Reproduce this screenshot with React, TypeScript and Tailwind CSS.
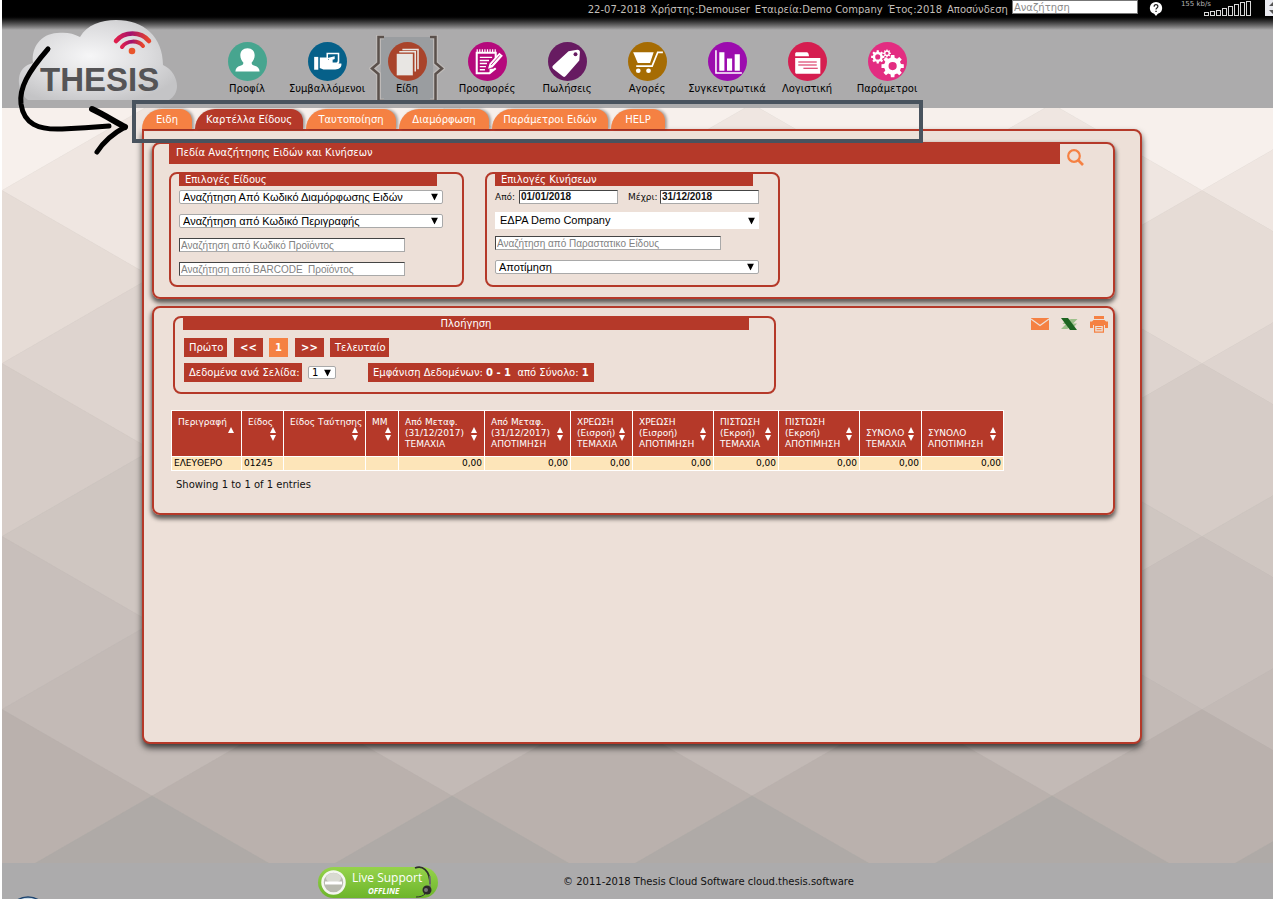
import type { ReactNode } from "react";
import clsx from "clsx";

const TILE_W = 300;
const TILE_H = 173;

const backdropStops: [number, number[]][] = [
  [100, [247, 240, 237]],
  [191, [239, 230, 225]],
  [277, [230, 220, 214]],
  [450, [214, 204, 199]],
  [623, [200, 191, 187]],
  [740, [193, 184, 180]],
  [800, [185, 176, 172]],
  [882, [175, 170, 167]],
];

function backdropColor(y: number) {
  let prev = backdropStops[0];
  for (const stop of backdropStops) {
    if (y <= stop[0]) {
      const span = stop[0] - prev[0] || 1;
      const t = Math.max(0, (y - prev[0]) / span);
      const rgb = stop[1].map((c, i) => Math.round(prev[1][i] + (c - prev[1][i]) * t));
      return `rgb(${rgb.join(",")})`;
    }
    prev = stop;
  }
  return `rgb(${prev[1].join(",")})`;
}

// Rows of rhombi, each row a bit darker than the one above
function Backdrop() {
  const tiles: ReactNode[] = [];
  for (let row = 0; row < 11; row++) {
    const cy = 104 + (row * TILE_H) / 2;
    const shift = row % 2 === 0 ? 0 : 150;
    for (let col = -1; col < 6; col++) {
      const cx = shift + col * TILE_W;
      const fill = backdropColor(cy);
      tiles.push(
        <path
          key={`${row}-${col}`}
          d={`M${cx} ${cy - TILE_H / 2}L${cx + TILE_W / 2} ${cy}L${cx} ${cy + TILE_H / 2}L${cx - TILE_W / 2} ${cy}Z`}
          fill={fill}
          stroke={fill}
          strokeWidth={0.5}
        />
      );
    }
  }
  return (
    <svg
      className="absolute inset-0 w-full h-full"
      viewBox="0 108 1271 755"
      preserveAspectRatio="xMinYMin slice"
      aria-hidden="true"
    >
      {tiles}
    </svg>
  );
}

function gear(cx: number, cy: number, r: number, teeth: number, hole: number) {
  const pts: string[] = [];
  const step = (Math.PI * 2) / teeth;
  for (let i = 0; i < teeth; i++) {
    const a = i * step;
    [
      [-0.3, 0.76],
      [-0.2, 1],
      [0.2, 1],
      [0.3, 0.76],
    ].forEach(([o, k]) => {
      pts.push(`${(cx + Math.cos(a + o * step) * r * k).toFixed(2)} ${(cy + Math.sin(a + o * step) * r * k).toFixed(2)}`);
    });
  }
  return `M${pts.join("L")}Z M${cx - hole} ${cy}a${hole} ${hole} 0 1 0 ${hole * 2} 0a${hole} ${hole} 0 1 0 ${-hole * 2} 0Z`;
}

const navItems: { label: string; color: string; active?: boolean; icon: ReactNode }[] = [
  {
    label: "Προφίλ",
    color: "#47a58f",
    icon: (
      <path
        fill="#fff"
        d="M19 6c4.500 0 7 3 7 7 0 3-1.500 5.800-3 7.200 0 1.600 1 2.300 3 3 3 1 4.500 2.300 4.800 5.600H7.200c.3-3.300 1.800-4.600 4.800-5.600 2-.7 3-1.400 3-3-1.500-1.400-3-4.200-3-7.200 0-4 2.500-7 7-7z"
      />
    ),
  },
  {
    label: "Συμβαλλόμενοι",
    color: "#066089",
    icon: (
      <g fill="#fff">
        <path d="M6 14.500h4V27H6z" />
        <path d="M11.500 15h7.500v3h5v3h8.500c.6 3.500-2 5.800-6 5.800H15l-3.500-1.500z" />
        <path d="M18 10.500h12.500v8c0 2.500-1 3.500-3 3.500h-6.500c-2 0-3-1-3-3z" />
        <path fill="#066089" d="M19.500 12H29v5.500c0 1.700-.7 2.500-2.200 2.500H24v-2.500h-4.500z" />
        <path d="M19 15.500l7-1.500v2.500l-5 2z" />
      </g>
    ),
  },
  {
    label: "Είδη",
    color: "#a9442b",
    active: true,
    icon: (
      <g fill="#e8e6e3">
        <path d="M14 6.500h16v20h-1.500V8H14z" />
        <path d="M11 8.700h16.300v20h-1.500V10.200H11z" />
        <path d="M8.500 11.500h15.700v21H8.500z" />
      </g>
    ),
  },
  {
    label: "Προσφορές",
    color: "#b5097c",
    icon: (
      <g>
        <path fill="none" stroke="#fff" strokeWidth="2" d="M27 16V10.500H8.500v20H21l6-5" />
        <path stroke="#fff" strokeWidth="1.200" d="M9 7v3M11.500 7v3M14 7v3M16.500 7v3M19 7v3M21.500 7v3M24 7v3M26.500 7v3" />
        <path stroke="#fff" strokeWidth="1.400" d="M11.500 15h12M11.500 18h9M11.500 21h7M11.500 24h6M11.500 27h5" />
        <path fill="#fff" d="M21 21L30.500 10.500l3.500 3L24 24.500l-4.500 1.500zM21 31v-5h6.500z" />
        <path stroke="#b5097c" strokeWidth=".8" d="M22.500 22.500L31 13" />
      </g>
    ),
  },
  {
    label: "Πωλήσεις",
    color: "#671b61",
    icon: (
      <g>
        <path fill="#fff" d="M20 9L28.500 7.500c1.500-.2 2.700.8 2.600 2.300L30.500 18 17.500 33c-1 1.200-2 1.300-3.200.3L5 26c-1-1-1-2 0-3z" />
        <circle cx="26.800" cy="12" r="1.900" fill="#671b61" />
      </g>
    ),
  },
  {
    label: "Αγορές",
    color: "#a66c03",
    icon: (
      <g fill="#fff">
        <path d="M5 10h20l-3.500 10.500H9.500z" />
        <path fill="none" stroke="#fff" strokeWidth="1.700" d="M34 10h-5l-5.500 13.500H8" />
        <circle cx="10" cy="28" r="2.300" />
        <circle cx="20" cy="28" r="2.300" />
      </g>
    ),
  },
  {
    label: "Συγκεντρωτικά",
    color: "#9c0cae",
    icon: (
      <g fill="#fff">
        <path d="M7 8h1.500v21.500H33V31H7z" />
        <path d="M11 10h5v18h-5zM18.500 16h5v12h-5zM26 12h5v16h-5z" />
      </g>
    ),
  },
  {
    label: "Λογιστική",
    color: "#d51e50",
    icon: (
      <g>
        <path fill="#fff" d="M7 14V11.500c0-1 .7-1.500 1.500-1.500H18c1 0 1.700.6 2 1.500l.5 2.500zM7 15.500h24.500V31H8.500C7.500 31 7 30.400 7 29.500z" />
        <path stroke="#d51e50" strokeWidth="1" d="M10 19.500h18M10 22.500h18M15 25.500h14" />
      </g>
    ),
  },
  {
    label: "Παράμετροι",
    color: "#e32d81",
    icon: (
      <g fill="#fff" fillRule="evenodd">
        <path d={gear(24, 23.5, 11, 8, 4)} />
        <path d={gear(9.5, 14.5, 6.5, 8, 2.5)} />
        <path d={gear(18.5, 11, 3.8, 8, 1.5)} />
      </g>
    ),
  },
];

function Bracket({ flip }: { flip?: boolean }) {
  return (
    <svg
      className={clsx("absolute top-0 w-4 h-[68px]", flip ? "right-[2px] -scale-x-100" : "left-[2px]")}
      viewBox="0 0 16 68"
      aria-hidden="true"
    >
      <path
        d="M15 2H9.500V28L3 33.500 9.500 39V66H15"
        fill="none"
        stroke="#c9c5c0"
        strokeWidth="5"
        opacity=".6"
      />
      <path d="M15 2H9.500V28L3 33.500 9.500 39V66H15" fill="none" stroke="#5b514c" strokeWidth="2.500" />
    </svg>
  );
}

function Logo() {
  return (
    <svg className="block w-[164px] h-[86px]" viewBox="16 17 164 86" role="img" aria-label="Thesis">
      <defs>
        <radialGradient id="cloud" cx=".45" cy=".45" r=".62">
          <stop offset="0" stopColor="#f6f6f7" />
          <stop offset=".6" stopColor="#dcdcde" />
          <stop offset="1" stopColor="#c4c4c6" />
        </radialGradient>
        <linearGradient id="wifi" x1="0" x2="1">
          <stop offset="0" stopColor="#e0204c" />
          <stop offset=".45" stopColor="#a3126e" />
          <stop offset="1" stopColor="#e8452c" />
        </linearGradient>
      </defs>
      <path
        fill="url(#cloud)"
        d="M28 100C21 95 18 86 19 78c1-8 6-13 14-15-2-16 8-29 24-30 9-1 16 0 23 4C87 25 101 20 116 20c28 0 47 17 47 45 9 4 14 13 14 21 0 6-3 11-8 14z"
      />
      <text
        x="40"
        y="91"
        fontFamily="'Liberation Sans', sans-serif"
        fontWeight="700"
        fontSize="33"
        fill="#555456"
      >
        THESIS
      </text>
      <path d="M116 41C124 31 141 31 149 41" fill="none" stroke="url(#wifi)" strokeWidth="4.500" strokeLinecap="round" />
      <path d="M122 47C127 40 138 40 143 46" fill="none" stroke="url(#wifi)" strokeWidth="4" strokeLinecap="round" />
      <circle cx="132" cy="51" r="3.300" fill="#e9552b" />
    </svg>
  );
}

function TopBar() {
  return (
    <div className="h-[30px] bg-linear-to-b from-black from-50% to-[#acabac] to-100% flex justify-end items-start text-[10px] text-[#c3bfb9]">
      <div className="flex gap-[5px] pt-[3px] leading-[13px] whitespace-pre">
        <span>22-07-2018</span>
        <span>Χρήστης:Demouser</span>
        <span>Εταιρεία:Demo Company</span>
        <span>Έτος:2018</span>
        <a href="#logout">Αποσύνδεση</a>
      </div>
      <input
        type="text"
        aria-label="Αναζήτηση"
        placeholder="Αναζήτηση"
        className="ml-1 w-[126px] h-[14px] bg-white border border-[#777] px-px text-[10px] text-black placeholder:text-[#8a8a8a]"
      />
      <button type="button" aria-label="Βοήθεια" className="ml-[11px] mt-[2px]">
        <svg className="block w-[14px] h-[14px]" viewBox="0 0 15 15">
          <path d="M7.500 0a7 6.500 0 0 1 2 12.600L7.500 15l-2-2.400A7 6.500 0 0 1 7.500 0z" fill="#fff" />
          <path d="M5.500 5c0-3 4-2.800 4-.3C9.500 6.500 7.500 6.400 7.500 8" fill="none" stroke="#222" strokeWidth="1.300" />
          <path d="M6.800 9.300h1.500v1.400H6.800z" fill="#222" />
        </svg>
      </button>
      <span className="ml-[18px] text-[7px] leading-[9px] whitespace-nowrap text-[#b5b5b5]">155 kb/s</span>
      <svg className="block w-[50px] h-[17px] -ml-2" viewBox="0 0 50 17" aria-hidden="true">
        <g fill="none" stroke="#d8d8d8" strokeWidth="1">
          {[3, 4, 5, 7, 9, 11, 13, 14].map((h, i) => (
            <rect key={i} x={1.5 + i * 6} y={15.5 - h} width="4" height={h} />
          ))}
        </g>
      </svg>
      <span className="ml-3 w-2 h-4 bg-[#e9eaf0] overflow-hidden">
        <svg className="block w-[16px] h-4" viewBox="0 0 16 16" aria-hidden="true">
          <path d="M8 2l-4 4h8zM8 14l-4-4h8z" fill="#555" />
        </svg>
      </span>
    </div>
  );
}

function Header() {
  return (
    <header className="bg-[#acabac]">
      <TopBar />
      <div className="flex h-[78px]">
        <div className="w-[205px] shrink-0 pl-[14px]">
          <div className="-mt-[13px]">
            <Logo />
          </div>
        </div>
        <nav className="flex">
          {navItems.map((item) => (
            <a
              key={item.label}
              href="#"
              className="relative w-20 pt-3 flex flex-col items-center text-[10px] leading-[15px] text-black whitespace-nowrap"
            >
              {item.active && (
                <>
                  <span className="absolute left-[14px] top-[7px] w-[52px] h-[66px] bg-[#9a9da0]" />
                  <span className="absolute inset-x-0 top-[5px]">
                    <Bracket />
                    <Bracket flip />
                  </span>
                </>
              )}
              <svg className="relative block w-[39px] h-[39px]" viewBox="0 0 38 38" aria-hidden="true">
                <circle cx="19" cy="19" r="19" fill={item.color} />
                {item.icon}
              </svg>
              <span className="relative">{item.label}</span>
            </a>
          ))}
        </nav>
      </div>
    </header>
  );
}

const tabs = [
  { label: "Ειδη", width: "w-[50px]" },
  { label: "Καρτέλλα Είδους", width: "w-[108px]", active: true },
  { label: "Ταυτοποίηση", width: "w-[90px]" },
  { label: "Διαμόρφωση", width: "w-[90px]" },
  { label: "Παράμετροι Ειδών", width: "w-[116px]" },
  { label: "HELP", width: "w-[54px]" },
];

function Tabs() {
  return (
    <div className="flex gap-[3px] h-5">
      {tabs.map((t) => (
        <button
          key={t.label}
          type="button"
          className={clsx(
            "h-5 rounded-tl-[20px] rounded-tr-[12px] text-[10px] text-white whitespace-nowrap shadow-[2px_0_3px_rgba(0,0,0,0.35)]",
            t.width,
            t.active ? "bg-[#b53929]" : "bg-[#f58143]"
          )}
        >
          {t.label}
        </button>
      ))}
    </div>
  );
}

function Select({ label, options, className }: { label: string; options: string[]; className: string }) {
  return (
    <div className={clsx("relative bg-white text-black", className)}>
      <select aria-label={label} className="block w-full h-full appearance-none bg-transparent pl-[3px] leading-none">
        {options.map((o) => (
          <option key={o}>{o}</option>
        ))}
      </select>
      <svg
        className="absolute right-1 top-1/2 -translate-y-1/2 w-[7px] h-[7px] pointer-events-none"
        viewBox="0 0 8 8"
        aria-hidden="true"
      >
        <path d="M0 0h8L4 8z" fill="#000" />
      </svg>
    </div>
  );
}

const selectBox = "h-[14px] border border-[#a9a9a9] rounded-[2px] text-[11px] font-['Liberation_Sans',sans-serif]";
const inputBox =
  "block h-[14px] bg-white border border-[#a9a9a9] border-t-[#444] border-l-[#444] px-px text-[10px] font-['Liberation_Sans',sans-serif] placeholder:text-[#828282]";

function TextField({ label, className }: { label: string; className?: string }) {
  return <input type="text" aria-label={label} placeholder={label} className={clsx(inputBox, "w-[226px]", className)} />;
}

function Group({ title, children }: { title: string; children: ReactNode }) {
  return (
    <section className="w-[295px] h-[115px] border-2 border-[#b53929] rounded-lg pl-2">
      <h3 className="w-[258px] h-3 bg-[#b53929] pl-[6px] text-[10px] leading-[11px] text-white">{title}</h3>
      {children}
    </section>
  );
}

function SearchPanel() {
  return (
    <section className="border-2 border-[#b53929] rounded-lg h-[157px] pl-[15px] shadow-[0_3px_4px_1px_rgba(0,0,0,0.6)]">
      <div className="flex">
        <h2 className="flex-1 h-5 bg-[#b53929] pl-[7px] text-[10px] leading-[18px] text-white">
          Πεδία Αναζήτησης Ειδών και Κινήσεων
        </h2>
        <button type="button" aria-label="Αναζήτηση" className="w-[53px] pl-[7px] pt-[5px]">
          <svg className="block w-[17px] h-[17px]" viewBox="0 0 17 17">
            <circle cx="7" cy="7" r="5.800" fill="none" stroke="#f58143" strokeWidth="2.200" />
            <path d="M11 11l5 5" stroke="#f58143" strokeWidth="2.600" />
          </svg>
        </button>
      </div>
      <div className="flex gap-[21px] mt-[6px]">
        <Group title="Επιλογές Είδους">
          <div className="flex flex-col gap-[10px] pt-1 w-[264px]">
            <Select label="Διαμόρφωση" options={["Αναζήτηση Από Κωδικό Διαμόρφωσης Ειδών"]} className={selectBox} />
            <Select label="Περιγραφή" options={["Αναζήτηση από Κωδικό Περιγραφής"]} className={selectBox} />
            <TextField label="Αναζήτηση από Κωδικό Προϊόντος" />
            <TextField label="Αναζήτηση από BARCODE  Προϊόντος" />
          </div>
        </Group>
        <Group title="Επιλογές Κινήσεων">
          <div className="flex justify-between pt-1 w-[264px] text-[9px] leading-[14px]">
            <label className="flex">
              <span className="w-6">Από:</span>
              <input type="text" defaultValue="01/01/2018" className={clsx(inputBox, "w-[99px] font-bold")} />
            </label>
            <label className="flex">
              <span className="w-8">Μέχρι:</span>
              <input type="text" defaultValue="31/12/2018" className={clsx(inputBox, "w-[99px] font-bold")} />
            </label>
          </div>
          <div className="flex flex-col w-[264px] pt-2">
            <Select
              label="Έδρα"
              options={["ΕΔΡΑ Demo Company"]}
              className="h-[17px] pl-[2px] text-[11px] font-['Liberation_Sans',sans-serif]"
            />
            <TextField label="Αναζήτηση από Παραστατικο Είδους" className="mt-[7px]" />
            <Select label="Αποτίμηση" options={["Αποτίμηση"]} className={clsx(selectBox, "mt-[10px]")} />
          </div>
        </Group>
      </div>
    </section>
  );
}

function Pager() {
  const btn = "h-[19px] bg-[#b53929] text-white px-[5px] whitespace-nowrap";
  return (
    <section className="w-[603px] h-[78px] border-2 border-[#b53929] rounded-lg pl-2 text-[10px]">
      <h3 className="w-[566px] h-3 bg-[#b53929] text-center leading-[11px] text-white">Πλοήγηση</h3>
      <div className="flex pt-2 pl-px">
        <button type="button" className={clsx(btn, "w-[43px]")}>Πρώτο</button>
        <button type="button" className={clsx(btn, "w-[29px] ml-[7px] font-bold")}>&lt;&lt;</button>
        <button type="button" className="w-[19px] h-[19px] ml-[6px] bg-[#f58143] text-white font-bold">1</button>
        <button type="button" className={clsx(btn, "w-[29px] ml-[7px] font-bold")}>&gt;&gt;</button>
        <button type="button" className={clsx(btn, "w-[59px] ml-[6px]")}>Τελευταίο</button>
      </div>
      <div className="flex items-center pt-[6px] pl-px leading-[19px]">
        <span className={clsx(btn, "w-[118px]")}>Δεδομένα ανά Σελίδα:</span>
        <Select
          label="Δεδομένα ανά Σελίδα"
          options={["1"]}
          className="ml-[6px] w-7 h-[13px] border border-[#a9a9a9] rounded-[2px] text-[10px]"
        />
        <span className={clsx(btn, "w-[226px] ml-8 whitespace-pre")}>
          Εμφάνιση Δεδομένων: <b>0 - 1</b>{"  "}από Σύνολο: <b>1</b>
        </span>
      </div>
    </section>
  );
}

const columns = [
  { lines: ["Περιγραφή"], width: "w-[70px]", sort: "asc" },
  { lines: ["Είδος"], width: "w-[42px]" },
  { lines: ["Είδος Ταύτησης"], width: "w-[82px]" },
  { lines: ["ΜΜ"], width: "w-[33px]" },
  { lines: ["Από Μεταφ.", "(31/12/2017)", "ΤΕΜΑΧΙΑ"], width: "w-[86px]" },
  { lines: ["Από Μεταφ.", "(31/12/2017)", "ΑΠΟΤΙΜΗΣΗ"], width: "w-[86px]" },
  { lines: ["ΧΡΕΩΣΗ", "(Εισροή)", "ΤΕΜΑΧΙΑ"], width: "w-[62px]" },
  { lines: ["ΧΡΕΩΣΗ", "(Εισροή)", "ΑΠΟΤΙΜΗΣΗ"], width: "w-[81px]" },
  { lines: ["ΠΙΣΤΩΣΗ", "(Εκροή)", "ΤΕΜΑΧΙΑ"], width: "w-[65px]" },
  { lines: ["ΠΙΣΤΩΣΗ", "(Εκροή)", "ΑΠΟΤΙΜΗΣΗ"], width: "w-[81px]" },
  { lines: ["", "ΣΥΝΟΛΟ", "ΤΕΜΑΧΙΑ"], width: "w-[62px]" },
  { lines: ["", "ΣΥΝΟΛΟ", "ΑΠΟΤΙΜΗΣΗ"], width: "w-[82px]" },
];

const row = ["ΕΛΕΥΘΕΡΟ", "01245", "", "", "0,00", "0,00", "0,00", "0,00", "0,00", "0,00", "0,00", "0,00"];

function ItemsTable() {
  return (
    <table className="table-fixed border-collapse w-[832px] text-[9px]">
      <thead>
        <tr className="h-[46px]">
          {columns.map((c, i) => (
            <th
              key={i}
              className={clsx(
                "relative border border-white bg-[#b53929] text-white font-normal text-left align-top p-0 pt-[6px] pl-[6px] leading-[11px] whitespace-nowrap",
                c.width
              )}
            >
              {c.lines.map((l, n) => (
                <span key={n} className="block min-h-[11px]">
                  {l}
                </span>
              ))}
              <svg className="absolute right-[7px] top-4 w-[6px] h-[14px]" viewBox="0 0 6 14" aria-hidden="true">
                <path d="M0 6L3 0l3 6z" fill="#fff" />
                {c.sort !== "asc" && <path d="M0 8h6L3 14z" fill="#fff" />}
              </svg>
            </th>
          ))}
        </tr>
      </thead>
      <tbody>
        <tr className="h-[14px] bg-[#fde5b9]">
          {row.map((v, i) => (
            <td
              key={i}
              className={clsx("border border-white p-0 px-[2px] leading-[13px] text-black", i > 3 && "text-right")}
            >
              {v}
            </td>
          ))}
        </tr>
      </tbody>
    </table>
  );
}

function ResultsPanel() {
  return (
    <section className="border-2 border-[#b53929] rounded-lg h-[209px] mt-[7px] shadow-[0_3px_4px_1px_rgba(0,0,0,0.6)]">
      <div className="flex justify-between pl-[19px] pt-2 pr-[5px]">
        <Pager />
        <div className="flex items-start gap-3">
          <button type="button" aria-label="Email" className="mt-[2px]">
            <svg className="block w-[18px] h-3" viewBox="0 0 18 12">
              <path d="M0 0h18v12H0z" fill="#f58143" />
              <path d="M0 1l9 6.500L18 1" fill="none" stroke="#ede0d8" strokeWidth="1.300" />
            </svg>
          </button>
          <button type="button" aria-label="Excel" className="mt-[2px]">
            <svg className="block w-[17px] h-3" viewBox="0 0 17 12">
              <path d="M10 1h6.500L12 5.500h4L13 9H8l-1.500 2H0l5-5H1.500L4 3z" fill="#9cc08a" />
              <path d="M0 0h7l9 12H9z" fill="#1d6421" />
            </svg>
          </button>
          <button type="button" aria-label="Εκτύπωση">
            <svg className="block w-[18px] h-[17px]" viewBox="0 0 18 17">
              <path d="M4 0h10v3H4zM0 5.500h2L3.500 4h11L16 5.500h2V12h-3V9H3v3H0z" fill="#f58143" />
              <path d="M4.600 9.500h8.800v6.700H4.600z" fill="none" stroke="#f58143" strokeWidth="1.200" />
              <path d="M6.500 11.500h5M6.500 13.700h5" stroke="#f58143" />
            </svg>
          </button>
        </div>
      </div>
      <div className="pl-[17px] pt-4">
        <ItemsTable />
        <p className="pl-[5px] pt-[7px] text-[10px] leading-[13px]">Showing 1 to 1 of 1 entries</p>
      </div>
    </section>
  );
}

// Hand-drawn arrow and frame that point at the tab strip
function TabHint() {
  return (
    <>
      <div className="absolute z-10 left-[130px] top-[100px] w-[791px] h-[43px] border-4 border-[#49535e] pointer-events-none" />
      <svg
        className="absolute z-10 -left-[2px] top-10 w-[136px] h-[120px] pointer-events-none"
        viewBox="0 40 136 120"
        fill="none"
        stroke="#000"
        strokeLinecap="round"
        strokeLinejoin="round"
        aria-hidden="true"
      >
        <path strokeWidth="5" d="M48 49C28 72 19 88 21 104C24 124 38 130 62 129C82 128 96 127 109 126" />
        <path strokeWidth="6" d="M92 109C101 113 114 121 125 127" />
        <path strokeWidth="5" d="M125 127C114 133 104 141 97 152" />
      </svg>
    </>
  );
}

function LiveSupport() {
  return (
    <a href="#support" className="relative flex w-[120px] h-[31px] rounded-full bg-linear-to-b from-[#95d34b] to-[#6db52a]">
      <svg className="block w-[25px] h-[25px] mt-[3px] ml-[3px]" viewBox="0 0 25 25" aria-hidden="true">
        <circle cx="12.500" cy="12.500" r="11" fill="#b9bab0" stroke="#f4f6ef" strokeWidth="2.500" />
        <ellipse cx="12.500" cy="8" rx="7.500" ry="5" fill="#d9dad2" />
        <path d="M4 11.500h17v3H4z" fill="#fff" />
      </svg>
      <span className="ml-[6px] pt-1 text-white font-['Open_Sans',sans-serif] whitespace-nowrap">
        <span className="block text-[12px] leading-[14px]">Live Support</span>
        <span className="block pl-4 text-[8px] leading-[11px] font-bold italic">OFFLINE</span>
      </span>
      <svg className="absolute right-1 -top-px w-5 h-8" viewBox="0 0 20 32" fill="none" aria-hidden="true">
        <path d="M1 2C8-1 16 4 16 18" stroke="#2e2e2e" strokeWidth="1.800" />
        <path d="M16 10v14" stroke="#777" strokeWidth="1.500" />
        <circle cx="13" cy="24" r="4.500" fill="#2c2a2a" />
        <circle cx="12" cy="24" r="2" fill="#777" />
        <path d="M11 28c-2 2-5 3-9 3" stroke="#333" />
      </svg>
    </a>
  );
}

export default function App() {
  return (
    <div className="relative min-h-screen flex flex-col overflow-hidden border-l-2 border-b border-white bg-[#acabac] font-['DejaVu_Sans',Verdana,sans-serif] text-[#111]">
      <Header />
      <main className="relative flex-1">
        <Backdrop />
        <div className="relative ml-[140px] mr-[131px] pt-px">
          <Tabs />
          <div className="min-h-[615px] bg-[#ede0d8] border-2 border-[#b53929] rounded-lg rounded-tl-none pl-2 pr-[25px] pt-[11px] shadow-[0_4px_6px_rgba(0,0,0,0.7)]">
            <SearchPanel />
            <ResultsPanel />
          </div>
        </div>
      </main>
      <footer className="relative h-9 bg-[#acabac] flex pl-[316px]">
        <div className="pt-1">
          <LiveSupport />
        </div>
        <p className="ml-[125px] pt-3 text-[10px] leading-[13px]">© 2011-2018 Thesis Cloud Software cloud.thesis.software</p>
        <svg className="absolute left-3 bottom-0 w-7 h-[3px]" viewBox="0 0 28 3" aria-hidden="true">
          <circle cx="14" cy="21" r="20" fill="#c9dbe8" stroke="#1c4470" strokeWidth="1.500" />
        </svg>
      </footer>
      <TabHint />
    </div>
  );
}
